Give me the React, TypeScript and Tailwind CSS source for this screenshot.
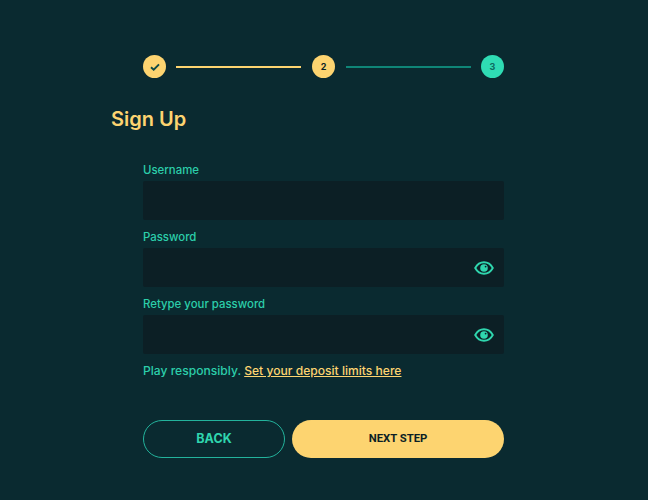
const EyeIcon = () => (
  <svg width="20" height="14" viewBox="0 0 20 14" fill="none">
    <path
      d="M1.2 7C3.2 3.3 6.3 1.3 10 1.3S16.8 3.3 18.8 7C16.8 10.7 13.700 12.700 10 12.700S3.200 10.700 1.200 7Z"
      stroke="#2fd6ae"
      strokeWidth="1.9"
    />
    <circle cx="10" cy="7" r="3.8" fill="#2fd6ae" />
    <circle cx="11.600" cy="5.600" r="0.900" fill="#0c1f25" />
  </svg>
);

const StepCircle = ({
  children,
  className,
}: {
  children: React.ReactNode;
  className: string;
}) => (
  <div
    className={`flex h-[23px] w-[23px] shrink-0 items-center justify-center rounded-full text-[9px] font-bold ${className}`}
  >
    {children}
  </div>
);

const Field = ({ label, eye }: { label: string; eye?: boolean }) => (
  <div className="flex flex-col">
    <label className="h-[28px] pt-[7px] text-[11.4px] leading-[20px] font-medium text-[#2cceaa]">
      {label}
    </label>
    <div className="flex h-[39px] items-center justify-end rounded-[2px] bg-[#0c1f25] pr-[10px]">
      {eye && <EyeIcon />}
    </div>
  </div>
);

export default function App() {
  return (
    <div className="h-[500px] w-[648px] overflow-hidden bg-[#0a2a30] pt-[55px] pl-[111px] font-['Inter',sans-serif]">
      <div className="ml-[32px] flex w-[361px] items-center">
        <StepCircle className="bg-[#fdd470]">
          <svg width="10" height="8" viewBox="0 0 10 8" fill="none">
            <path d="M1 4.200L3.700 6.700L9 1.300" stroke="#0e4a48" strokeWidth="1.900" />
          </svg>
        </StepCircle>
        <div className="mr-[11px] ml-[10px] h-[2px] w-[125px] bg-[#fdd470]" />
        <StepCircle className="bg-[#fdd470] text-[#0c1f25]">2</StepCircle>
        <div className="mr-[10px] ml-[11px] h-[2px] w-[125px] bg-[#0f8577]" />
        <StepCircle className="bg-[#2fdcb4] text-[#0e6a60]">3</StepCircle>
      </div>

      <h1 className="mt-[26px] h-[30px] text-[20px] leading-[30px] font-semibold text-[#fdd470]">
        Sign Up
      </h1>

      <div className="mt-[19px] ml-[32px] flex w-[361px] flex-col">
        <Field label="Username" />
        <Field label="Password" eye />
        <Field label="Retype your password" eye />

        <p className="mt-[7px] h-[20px] text-[12.1px] leading-[20px] font-medium text-[#2cceaa]">
          Play responsibly.{" "}
          <a className="text-[#fdd470] underline">Set your deposit limits here</a>
        </p>

        <div className="mt-[39px] flex gap-[7px]">
          <button className="h-[38px] w-[142px] rounded-full border border-[#23b39c] text-[12.5px] font-bold text-[#2fd6ae]">
            BACK
          </button>
          <button className="h-[38px] flex-1 rounded-full bg-[#fdd470] font-['Roboto',sans-serif] text-[11.3px] font-bold text-[#0c1f25]">
            NEXT STEP
          </button>
        </div>
      </div>
    </div>
  );
}
